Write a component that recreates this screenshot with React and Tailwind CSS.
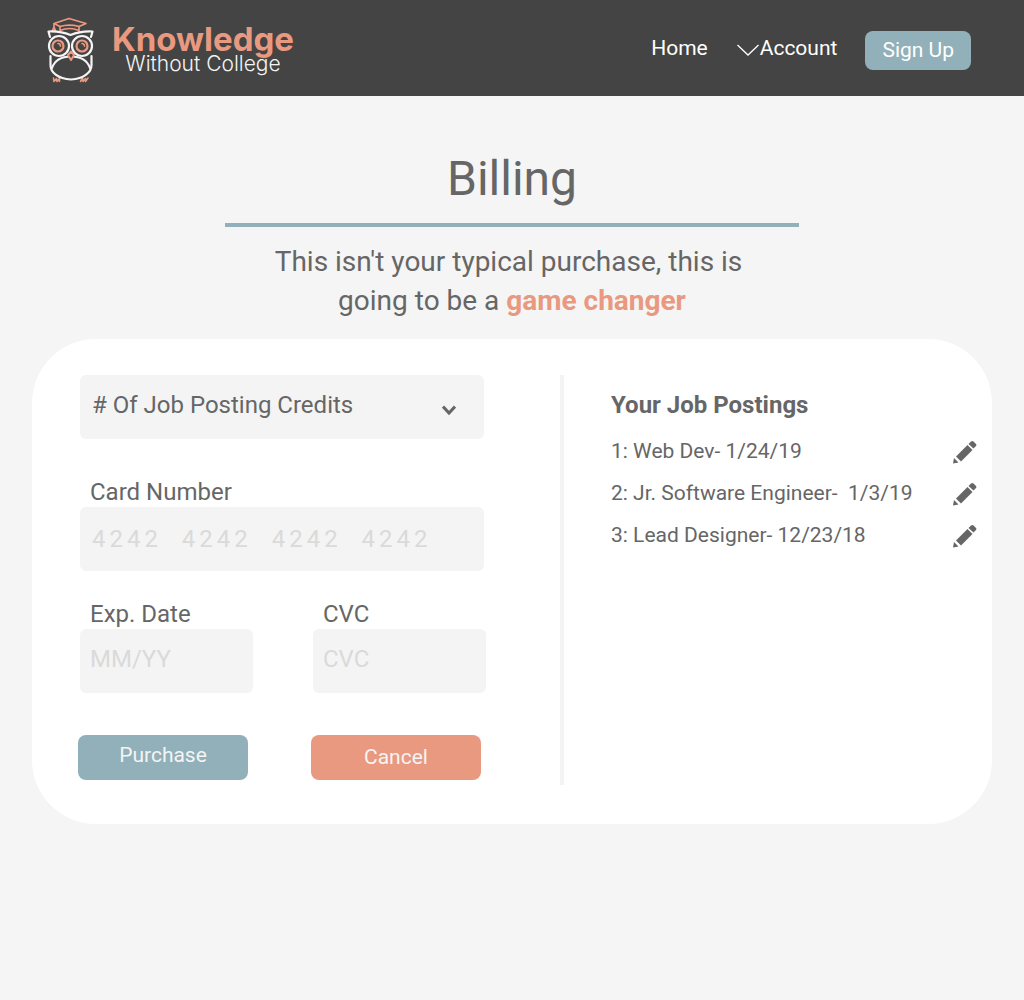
import React from "react";

function OwlLogo() {
  return (
    <svg width="60" height="80" viewBox="0 0 60 80" fill="none" strokeLinecap="round" strokeLinejoin="round" aria-hidden="true">
      <g stroke="#e99980" strokeWidth="1.700">
        <path d="M14 13.500 29 8.500 46 13.500 39 16.500C32 14.500 26 14.500 20 16.500Z" />
        <path d="M20 16.500v4M39 16.500v5M20 20.500c6-2.500 13-2.500 19 0M14 14v3l-1.500 3.500h3L14 17" />
        <circle cx="18" cy="36" r="5.500" strokeWidth="2.200" />
        <circle cx="42" cy="36" r="5.500" strokeWidth="2.200" />
        <path d="M18 33.500a2.500 2.500 0 0 1 2.500 2.500M42 33.500a2.500 2.500 0 0 1 2.500 2.500" />
        <path d="M13.500 68l.5 3.500 2.500-3 .5 3 2.500-3v3M40.500 71.500l2-3.500.5 3.500 2.500-3v3l2.500-3.500" strokeWidth="1.600" />
      </g>
      <g stroke="#f4f4f4" strokeWidth="2.200">
        <path d="M10 27 8.500 21.500C16 21 23 22 30.500 25 38 22 44 21 52.500 21.500L51 27" />
        <circle cx="19" cy="36" r="10" />
        <circle cx="42" cy="36" r="10" />
        <path d="M10.500 46v9c0 7 7 14 20.500 14.500C44 69 51.500 62 51.500 55V46" />
        <path d="M12 58C15 49.500 23 46.500 31 46.500S47 49.500 50 58" />
      </g>
      <path d="M31 41.500 34 45 31 50 28 45Z" fill="#444444" stroke="#e99980" strokeWidth="2" />
    </svg>
  );
}

function Pencil() {
  return (
    <svg width="24" height="24" viewBox="0 0 24 24" fill="#666666" aria-hidden="true">
      <path d="M0 23.500 1 18 5.500 22.500Z" />
      <path d="M3 16.500 14.500 5 19.500 10 8 21.500Z" />
      <path d="M15.500 4 18 1.500Q19.500 .5 20.500 1.500L23 4Q24 5 23 6L20.500 8.500Z" />
    </svg>
  );
}

function Field({ id, label, placeholder, className = "", inputClass }) {
  return (
    <div className={`flex min-w-0 flex-col ${className}`}>
      <label htmlFor={id} className="pl-[10px] leading-[30px]">{label}</label>
      <input id={id} placeholder={placeholder} className={`h-16 w-full rounded-md bg-[#f4f4f4] outline-none placeholder:text-[#dadada] placeholder:opacity-100 ${inputClass}`} />
    </div>
  );
}

const postings = [
  "1: Web Dev- 1/24/19",
  "2: Jr. Software Engineer-  1/3/19",
  "3: Lead Designer- 12/23/18",
];

export default function App() {
  return (
    <div className="min-h-screen bg-[#f5f5f5] font-[Roboto,sans-serif] text-[#666666]">
      <header className="flex h-24 items-center justify-between bg-[#444444] pr-[53px] pl-10">
        <a href="#" className="flex items-center pt-1">
          <OwlLogo />
          <span className="flex flex-col items-center pl-3 font-[Inter,sans-serif]">
            <span className="text-[33px] leading-7 font-bold text-[#e99980]">Knowledge</span>
            <span className="text-[21px] leading-[22px] font-light text-[#f4f4f4]">Without College</span>
          </span>
        </a>
        <nav className="flex items-center text-[21px] text-white">
          <a href="#" className="pt-0.5">Home</a>
          <button type="button" className="ml-7 flex items-center pt-0.5">
            <svg width="24" height="14" viewBox="0 0 24 14" fill="none" stroke="white" strokeWidth="1.300" aria-hidden="true">
              <path d="M1.500 3 12 13 22.500 3" />
            </svg>
            Account
          </button>
          <button type="button" className="mt-[5px] ml-7 h-[39px] rounded-lg bg-[#91b0b9] px-[17px]">Sign Up</button>
        </nav>
      </header>

      <main className="px-8 pt-[51px]">
        <h1 className="text-center text-[48px] leading-[64px]">Billing</h1>
        <hr className="mx-auto mt-3 w-[574px] max-w-full border-0 border-t-4 border-[#91b0b9]" />
        <p className="mt-[15px] text-center text-[28px] leading-[39px]">
          This isn't your typical purchase, this is&nbsp;<br />
          going to be a <strong className="font-bold text-[#e99980]">game changer</strong>
        </p>

        <section className="mt-[19px] grid grid-cols-[11fr_9fr] rounded-[64px] bg-white pt-9 pb-[39px] text-[24px]">
          <form className="pr-[74px] pb-[5px] pl-12" onSubmit={(e) => e.preventDefault()}>
            <div className="relative mr-0.5">
              <select aria-label="# Of Job Posting Credits" className="h-16 w-full appearance-none rounded-md bg-[#f4f4f4] pr-14 pb-1 pl-3 outline-none">
                <option># Of Job Posting Credits</option>
              </select>
              <svg className="pointer-events-none absolute top-7 right-7" width="14" height="14" viewBox="0 0 14 14" fill="none" stroke="#666666" strokeWidth="3" aria-hidden="true">
                <path d="M1 3.500 7 10 13 3.500" />
              </svg>
            </div>
            <Field id="card" label="Card Number" placeholder="4242  4242  4242  4242" className="mt-[38px] mr-0.5" inputClass="px-3 tracking-[4px]" />
            <div className="mt-7 grid grid-cols-2 gap-[60px]">
              <Field id="exp" label="Exp. Date" placeholder="MM/YY" inputClass="px-[10px] pb-1" />
              <Field id="cvc" label="CVC" placeholder="CVC" inputClass="px-[10px] pb-1" />
            </div>
            <div className="mt-[42px] mr-[5px] -ml-0.5 grid grid-cols-2 gap-[63px] text-[21px] text-[#f4f4f4]">
              <button type="submit" className="h-[45px] rounded-lg bg-[#91b0b9] pb-1">Purchase</button>
              <button type="button" className="h-[45px] rounded-lg bg-[#e99980]">Cancel</button>
            </div>
          </form>

          <div className="border-l-4 border-[#f4f4f4] pr-[15px] pl-[47px]">
            <h2 className="pt-3 leading-9 font-bold">Your Job Postings</h2>
            <ul className="mt-1.5 text-[21px]">
              {postings.map((p) => (
                <li key={p} className="flex h-[42px] items-center justify-between pt-1">
                  <span className="whitespace-pre">{p}</span>
                  <button type="button" aria-label={`Edit ${p}`}>
                    <Pencil />
                  </button>
                </li>
              ))}
            </ul>
          </div>
        </section>
      </main>
    </div>
  );
}
